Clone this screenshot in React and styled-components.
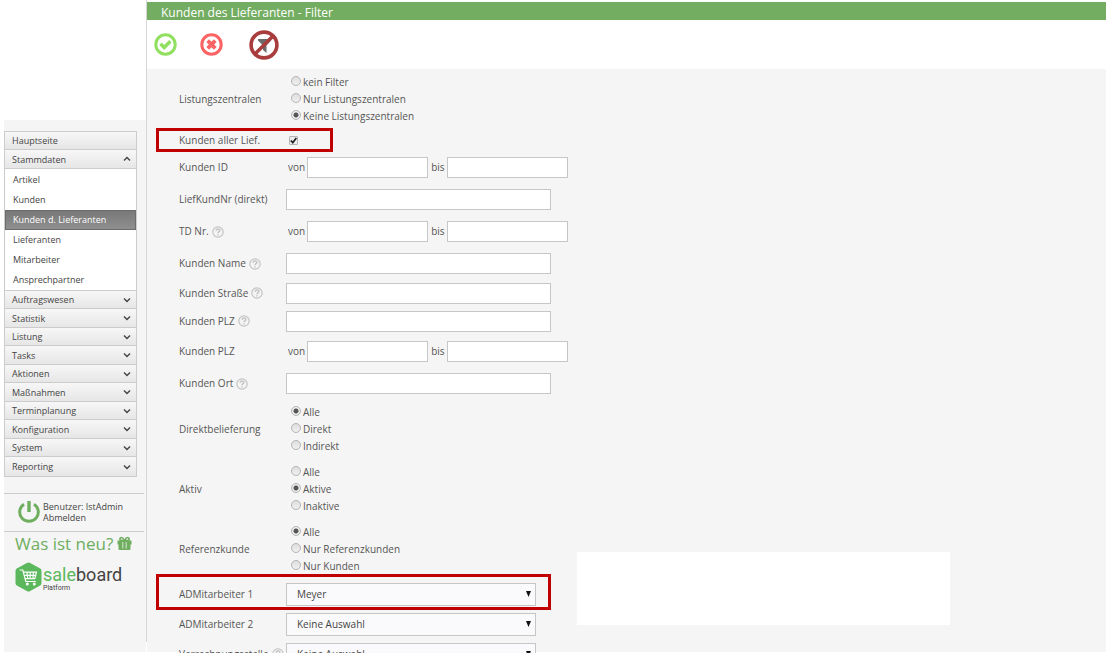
import styled, { createGlobalStyle, css } from "styled-components";

const GlobalStyle = createGlobalStyle`
  * {
    box-sizing: border-box;
  }

  body {
    margin: 0;
    background: #fff;
    color: #555;
    font-family: "Open Sans", sans-serif;
    font-size: 10px;
    line-height: 17px;
  }
`;

const Layout = styled.div`
  display: flex;
  height: 100vh;
  overflow: hidden;
  padding: 0 0 1px 4px;
`;

const Sidebar = styled.aside`
  flex: 0 0 142px;
  margin-top: 120px;
  padding-top: 11px;
  background: #f5f5f5;
`;

const Menu = styled.nav`
  width: 133px;
  border: 1px solid #ccc;
  background: #fff;
  font-size: 9px;
`;

const MenuButton = styled.button`
  display: flex;
  align-items: center;
  justify-content: space-between;
  width: 100%;
  height: 18px;
  padding: 0 5px 0 7px;
  border: 0;
  border-bottom: 1px solid #ccc;
  background: linear-gradient(#f7f7f7, #e6e6e6);
  color: #444;
  font: inherit;
  text-align: left;

  &:nth-of-type(even) {
    height: 19px;
  }

  &:last-child {
    border-bottom: 0;
  }
`;

const SubMenu = styled.div`
  display: flex;
  flex-direction: column;
  padding-top: 1px;
  border-bottom: 1px solid #ccc;
`;

const SubLink = styled.a`
  height: 20px;
  padding-left: 8px;
  color: #444;
  line-height: 20px;
  text-decoration: none;

  ${(p) =>
    p.$active &&
    css`
      background: linear-gradient(#777, #909090);
      box-shadow: inset 0 0 0 1px #6c6c6c;
      color: #fff;
    `}
`;

const UserBox = styled.div`
  display: flex;
  align-items: center;
  gap: 2px;
  width: 140px;
  height: 39px;
  margin-top: 16px;
  padding: 0 0 2px 13px;
  border-top: 1px solid #ccc;
  border-bottom: 1px solid #ccc;
  color: #444;
  font-size: 9px;
  line-height: 11px;

  a {
    display: block;
    color: inherit;
    text-decoration: none;
  }
`;

const News = styled.a`
  display: flex;
  align-items: center;
  gap: 4px;
  height: 22px;
  padding-left: 11px;
  color: #6fae5f;
  font-size: 17px;
  text-decoration: none;
  white-space: nowrap;
`;

const Brand = styled.div`
  display: flex;
  gap: 1px;
  margin-top: 8px;
  padding-left: 11px;
  color: #444;
  font-family: Roboto, sans-serif;
  font-size: 18px;
  line-height: 18px;

  div {
    padding-top: 4px;
  }

  span {
    color: #5cb85c;
  }

  small {
    display: block;
    font-size: 7px;
    line-height: 8px;
  }
`;

const Divider = styled.div`
  flex: 0 0 1px;
  margin-bottom: 10px;
  background: #d6d6d6;
`;

const Main = styled.main`
  position: relative;
  flex: 1;
  min-width: 0;
  padding-top: 2px;
  background: #f5f5f5;
  box-shadow: inset 0 2px #fff;
`;

const Title = styled.h1`
  height: 18px;
  margin: 0;
  padding-left: 14px;
  background: #73ad61;
  color: #fff;
  font-size: 12px;
  font-weight: 500;
  line-height: 21px;
`;

const Toolbar = styled.div`
  display: flex;
  align-items: center;
  height: 49px;
  padding-left: 7px;
  background: #fff;
`;

const ToolButton = styled.button`
  display: flex;
  margin-right: ${(p) => p.$space || 0}px;
  padding: 0;
  border: 0;
  background: none;
`;

const Row = styled.div`
  position: relative;
  display: flex;
  align-items: center;
  height: ${(p) => p.$height}px;
  padding-left: 32px;
`;

const Highlight = styled.div`
  position: absolute;
  top: -${(p) => p.$rise}px;
  bottom: -1px;
  left: 9px;
  width: ${(p) => p.$width}px;
  border: 3px solid #c00000;
  pointer-events: none;
`;

const Caption = styled.label`
  display: flex;
  align-items: center;
  gap: 3px;
  flex: 0 0 107px;
  white-space: nowrap;
`;

const Options = styled.div`
  display: flex;
  flex-direction: column;
  padding-left: 5px;

  label {
    display: flex;
    gap: 2px;
  }
`;

const Radio = styled.input`
  appearance: none;
  width: 10px;
  height: 10px;
  margin: 2px 0 0;
  border: 1px solid #b4b4b4;
  border-radius: 50%;
  background: linear-gradient(#dedede, #f0f0f0);

  &:checked {
    background: radial-gradient(circle, #555 0 2px, #eee 3px);
  }
`;

const CheckWrap = styled.span`
  display: grid;
  margin-left: 3px;

  > * {
    grid-area: 1 / 1;
  }

  svg {
    pointer-events: none;
  }
`;

const Checkbox = styled.input`
  appearance: none;
  width: 9px;
  height: 9px;
  margin: 0;
  border: 1px solid #b4b4b4;
  border-radius: 1px;
  background: #eee;

  &:not(:checked) + svg {
    visibility: hidden;
  }
`;

const TextField = styled.input`
  width: 265px;
  height: 21px;
  padding: 0 6px;
  border: 1px solid #c6c6c6;
  background: #fff;
  font: inherit;
`;

const Range = styled.div`
  display: flex;
  align-items: center;
  gap: 3px;
  padding-left: 2px;

  label {
    display: flex;
    align-items: center;
    gap: 2px;
  }

  ${TextField} {
    width: 121px;
  }
`;

const SelectWrap = styled.div`
  display: grid;
  align-items: center;

  > * {
    grid-area: 1 / 1;
  }

  svg {
    justify-self: end;
    margin-right: 5px;
    pointer-events: none;
  }
`;

const Select = styled.select`
  appearance: none;
  width: 250px;
  height: 23px;
  padding: 0 20px 0 10px;
  border: 1px solid #c6c6c6;
  border-radius: 0;
  background: #fafafc;
  color: #444;
  font: inherit;
`;

const Panel = styled.div`
  position: absolute;
  top: 552px;
  left: 430px;
  width: 373px;
  height: 73px;
  background: #fff;
`;

const menuItems = [
  "Auftragswesen",
  "Statistik",
  "Listung",
  "Tasks",
  "Aktionen",
  "Maßnahmen",
  "Terminplanung",
  "Konfiguration",
  "System",
  "Reporting",
];

const subItems = [
  "Artikel",
  "Kunden",
  "Kunden d. Lieferanten",
  "Lieferanten",
  "Mitarbeiter",
  "Ansprechpartner",
];

const fields = [
  {
    id: "zentralen",
    type: "radio",
    label: "Listungszentralen",
    options: ["kein Filter", "Nur Listungszentralen", "Keine Listungszentralen"],
    value: 2,
  },
  {
    id: "alle",
    type: "check",
    label: "Kunden aller Lief.",
    highlight: { width: 177, rise: 1 },
  },
  { id: "kundenId", type: "range", label: "Kunden ID" },
  { id: "liefKundNr", type: "text", label: "LiefKundNr (direkt)" },
  { id: "tdNr", type: "range", label: "TD Nr.", help: true },
  { id: "name", type: "text", label: "Kunden Name", help: true },
  { id: "strasse", type: "text", label: "Kunden Straße", help: true, compact: true },
  { id: "plz", type: "text", label: "Kunden PLZ", help: true, compact: true },
  { id: "plzRange", type: "range", label: "Kunden PLZ" },
  { id: "ort", type: "text", label: "Kunden Ort", help: true },
  {
    id: "direkt",
    type: "radio",
    label: "Direktbelieferung",
    options: ["Alle", "Direkt", "Indirekt"],
    value: 0,
  },
  {
    id: "aktiv",
    type: "radio",
    label: "Aktiv",
    options: ["Alle", "Aktive", "Inaktive"],
    value: 1,
  },
  {
    id: "referenz",
    type: "radio",
    label: "Referenzkunde",
    options: ["Alle", "Nur Referenzkunden", "Nur Kunden"],
    value: 0,
  },
  {
    id: "adm1",
    type: "select",
    label: "ADMitarbeiter 1",
    value: "Meyer",
    highlight: { width: 395, rise: 5 },
  },
  { id: "adm2", type: "select", label: "ADMitarbeiter 2", value: "Keine Auswahl" },
  {
    id: "verrechnung",
    type: "select",
    label: "Verrechnungsstelle",
    help: true,
    value: "Keine Auswahl",
  },
];

const rowHeights = { radio: 60, check: 22, range: 33, text: 31, select: 30 };

function Chevron({ up }) {
  return (
    <svg width="8" height="6" viewBox="0 0 8 6" fill="none" stroke="#444" strokeWidth="1.4">
      <path d={up ? "M1 4.5 4 1.5l3 3" : "M1 1.5l3 3 3-3"} />
    </svg>
  );
}

function HelpIcon() {
  return (
    <svg width="12" height="12" viewBox="0 0 12 12" fill="none" stroke="#c4c4c4">
      <circle cx="6" cy="6" r="5.2" strokeWidth="1.2" />
      <path d="M4.2 4.8c0-2.4 3.7-2.3 3.7-.3C7.9 5.8 6 5.700 6 7.300M6 8.200v1.300" strokeWidth="1.500" />
    </svg>
  );
}

function PowerIcon() {
  return (
    <svg width="24" height="24" viewBox="0 0 24 24" fill="none" stroke="#6fae5f" strokeWidth="3">
      <path d="M7 4.200a9.300 9.300 0 1 0 10 0" />
      <path d="M12 1v11" strokeWidth="3.400" />
    </svg>
  );
}

function GiftIcon() {
  return (
    <svg width="15" height="15" viewBox="0 0 15 15" fill="#6fae5f">
      <path d="M.5 4.500h14V8.500H.5zM1.500 8.500h12V13q0 1-1 1h-10q-1 0-1-1z" />
      <path d="M5.800 6v6.500M9.200 6v6.500" stroke="#f5f5f5" strokeWidth=".8" />
      <path
        d="M7.200 4.700H4.700c-2.400 0-2.300-3.200-.2-3.200 1.400 0 2 1.400 3 3.200 1-1.800 1.600-3.200 3-3.200 2.100 0 2.200 3.200-.2 3.200H7.700"
        fill="none"
        stroke="#6fae5f"
        strokeWidth="1.700"
      />
    </svg>
  );
}

function CartLogo() {
  return (
    <svg width="27" height="30" viewBox="0 0 27 30">
      <path
        d="M11.800 1q1.700-1 3.400 0l10 5.600q1.300.8 1.300 2.400v12q0 1.600-1.300 2.400l-10 5.600q-1.700 1-3.400 0l-10-5.600Q.5 22.600.5 21V9q0-1.600 1.300-2.400z"
        fill="#5cb85c"
      />
      <path
        d="M4.500 8h3.300l3 11.500h10M8.500 10.200h13l-1.700 6.500H10.200M9 13.300h11.700M12 10.200l.8 6.500M15.200 10.200v6.500M18.500 10.200l-.6 6.500"
        fill="none"
        stroke="#fff"
        strokeWidth="1.200"
      />
      <circle cx="12.300" cy="22" r="1.500" fill="#fff" />
      <circle cx="19.300" cy="22" r="1.500" fill="#fff" />
    </svg>
  );
}

function ApplyIcon() {
  return (
    <svg width="23" height="23" viewBox="0 0 23 23" fill="none" stroke="#92e05f">
      <circle cx="11.500" cy="11.500" r="9.700" strokeWidth="3" />
      <path d="M6.500 10.800l3.700 3.700 6.200-6.200" strokeWidth="3.600" />
    </svg>
  );
}

function CancelIcon() {
  return (
    <svg width="23" height="23" viewBox="0 0 23 23" fill="none" stroke="#fb6464">
      <circle cx="11.500" cy="11.500" r="9.700" strokeWidth="3" />
      <path d="M7.700 7.700l7.600 7.600M15.300 7.700l-7.600 7.600" strokeWidth="3.800" />
    </svg>
  );
}

function NoFilterIcon() {
  return (
    <svg width="30" height="30" viewBox="0 0 30 30">
      <path d="M9 9h13v1.500l-4.500 5V23l-3.500-3v-4.500l-5-5z" fill="#6b6b6b" />
      <g fill="none" stroke="#a93c3c" strokeWidth="3.600">
        <circle cx="15" cy="15" r="12.900" />
        <path d="M24 6 6 24" />
      </g>
    </svg>
  );
}

function Field({ field }) {
  const { id, type, options, value } = field;

  if (type === "radio") {
    return (
      <Options role="radiogroup" aria-labelledby={`${id}-label`}>
        {options.map((option, i) => (
          <label key={option}>
            <Radio type="radio" name={id} defaultChecked={i === value} />
            {option}
          </label>
        ))}
      </Options>
    );
  }

  if (type === "check") {
    return (
      <CheckWrap>
        <Checkbox id={id} type="checkbox" defaultChecked />
        <svg width="9" height="9" viewBox="0 0 9 9" fill="none" stroke="#222" strokeWidth="1.800">
          <path d="M1.800 4.500l2 2.200L7.300 2" />
        </svg>
      </CheckWrap>
    );
  }

  if (type === "range") {
    return (
      <Range>
        <label>
          von <TextField id={id} />
        </label>
        <label>
          bis <TextField />
        </label>
      </Range>
    );
  }

  if (type === "select") {
    return (
      <SelectWrap>
        <Select id={id} defaultValue={value}>
          <option>{value}</option>
        </Select>
        <svg width="5" height="6" viewBox="0 0 5 6">
          <path d="M0 0h5L2.500 6z" fill="#111" />
        </svg>
      </SelectWrap>
    );
  }

  return <TextField id={id} />;
}

function App() {
  return (
    <Layout>
      <GlobalStyle />
      <Sidebar>
        <Menu>
          <MenuButton>Hauptseite</MenuButton>
          <MenuButton>
            Stammdaten
            <Chevron up />
          </MenuButton>
          <SubMenu>
            {subItems.map((item) => (
              <SubLink key={item} href="#" $active={item === "Kunden d. Lieferanten"}>
                {item}
              </SubLink>
            ))}
          </SubMenu>
          {menuItems.map((item) => (
            <MenuButton key={item}>
              {item}
              <Chevron />
            </MenuButton>
          ))}
        </Menu>
        <UserBox>
          <PowerIcon />
          <div>
            Benutzer: IstAdmin
            <a href="#">Abmelden</a>
          </div>
        </UserBox>
        <News href="#">
          Was ist neu?
          <GiftIcon />
        </News>
        <Brand>
          <CartLogo />
          <div>
            <span>sale</span>board
            <small>Platform</small>
          </div>
        </Brand>
      </Sidebar>
      <Divider />
      <Main>
        <Title>Kunden des Lieferanten - Filter</Title>
        <Toolbar>
          <ToolButton $space={23} aria-label="Anwenden">
            <ApplyIcon />
          </ToolButton>
          <ToolButton $space={26} aria-label="Abbrechen">
            <CancelIcon />
          </ToolButton>
          <ToolButton aria-label="Filter entfernen">
            <NoFilterIcon />
          </ToolButton>
        </Toolbar>
        <form>
          {fields.map((field) => (
            <Row key={field.id} $height={field.compact ? 28 : rowHeights[field.type]}>
              <Caption
                id={`${field.id}-label`}
                as={field.type === "radio" ? "span" : undefined}
                htmlFor={field.type === "radio" ? undefined : field.id}
              >
                {field.label}
                {field.help && <HelpIcon />}
              </Caption>
              <Field field={field} />
              {field.highlight && (
                <Highlight $width={field.highlight.width} $rise={field.highlight.rise} />
              )}
            </Row>
          ))}
        </form>
        <Panel />
      </Main>
    </Layout>
  );
}

export default App;
